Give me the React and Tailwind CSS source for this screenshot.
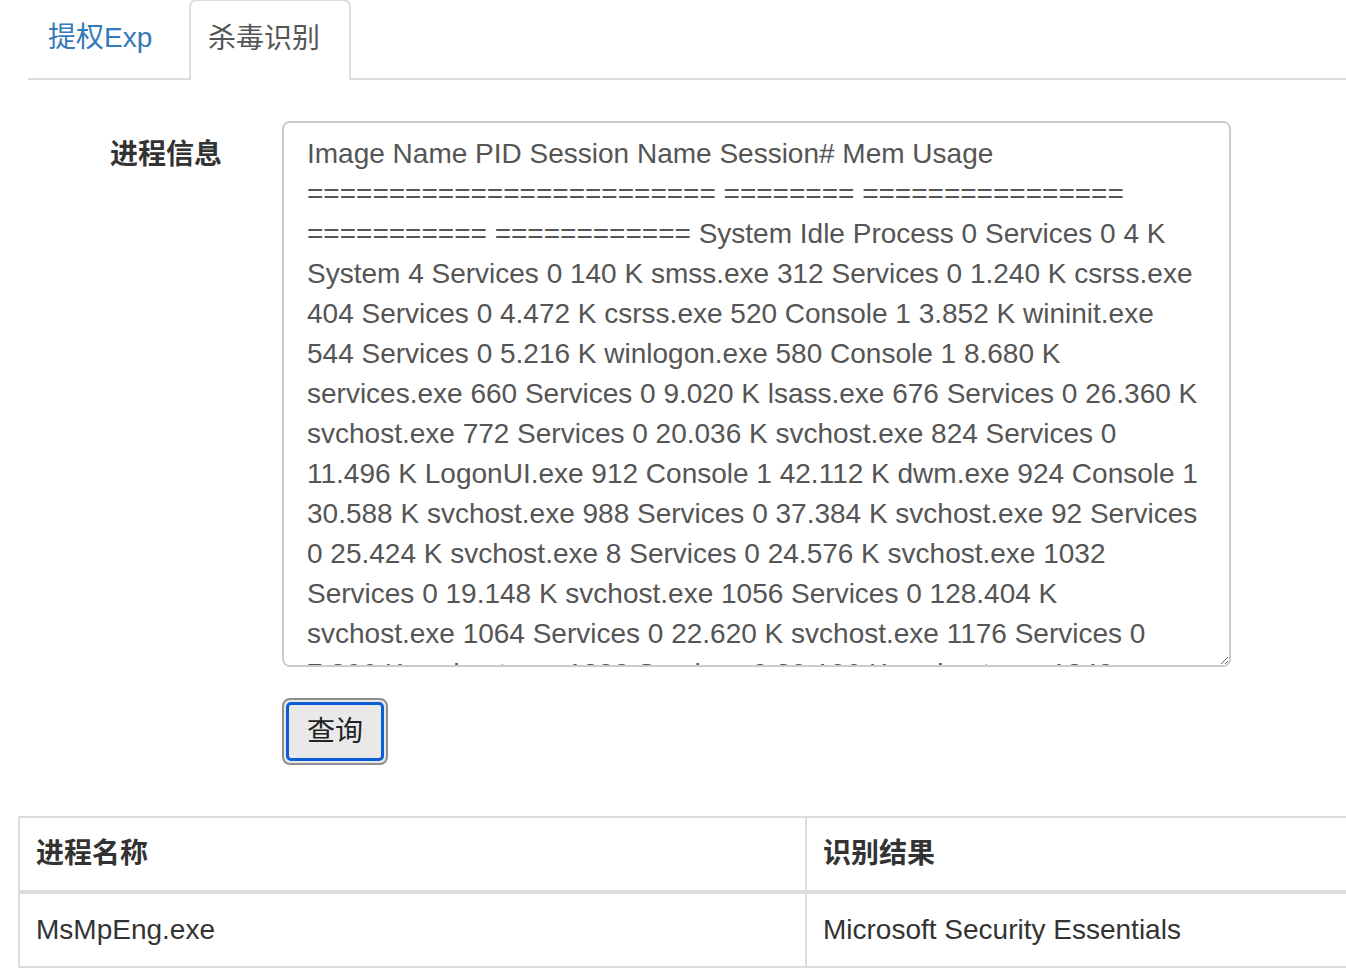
import { useState } from 'react'

const processText =
  'Image Name PID Session Name Session# Mem Usage ========================= ======== ================ =========== ============ System Idle Process 0 Services 0 4 K System 4 Services 0 140 K smss.exe 312 Services 0 1.240 K csrss.exe 404 Services 0 4.472 K csrss.exe 520 Console 1 3.852 K wininit.exe 544 Services 0 5.216 K winlogon.exe 580 Console 1 8.680 K services.exe 660 Services 0 9.020 K lsass.exe 676 Services 0 26.360 K svchost.exe 772 Services 0 20.036 K svchost.exe 824 Services 0 11.496 K LogonUI.exe 912 Console 1 42.112 K dwm.exe 924 Console 1 30.588 K svchost.exe 988 Services 0 37.384 K svchost.exe 92 Services 0 25.424 K svchost.exe 8 Services 0 24.576 K svchost.exe 1032 Services 0 19.148 K svchost.exe 1056 Services 0 128.404 K svchost.exe 1064 Services 0 22.620 K svchost.exe 1176 Services 0 7.396 K svchost.exe 1200 Services 0 39.196 K svchost.exe 1240 Services 0 14.208 K spoolsv.exe 1300 Services 0 12.944 K'

const font = "font-['Liberation_Sans','Noto_Sans_CJK_SC',sans-serif]"

export default function App() {
  const [text, setText] = useState(processText)

  return (
    <div className={`min-h-screen bg-white ${font} overflow-hidden`}>
      {/* Tabs */}
      <div className="flex ml-[28px] border-b-2 border-[#ddd] h-[80px]">
        <a className="w-[161px] pl-[20px] pt-[18px] text-[28px] leading-[40px] text-[#337ab7]">提权Exp</a>
        <div className="w-[162px] -mt-[1px] -mb-[2px] pl-[17px] pt-[18px] text-[28px] leading-[40px] text-[#555] bg-white border-2 border-b-0 border-[#ddd] rounded-t-[8px]">
          杀毒识别
        </div>
      </div>

      {/* Form */}
      <div className="flex mt-[41px]">
        <label className="w-[222px] shrink-0 text-right pt-[14px] text-[28px] leading-[40px] font-bold text-[#333]">
          进程信息
        </label>
        <div className="ml-[60px]">
          <textarea
            value={text}
            onChange={(e) => setText(e.target.value)}
            className={`block w-[949px] h-[546px] border-2 border-[#ccc] rounded-[8px] pt-[11px] px-[23px] text-[28px] leading-[40px] text-[#555] bg-white resize-y outline-none ${font}`}
          />
          <button className="mt-[31px] w-[106px] h-[67px] rounded-[8px] border-2 border-[#8f8f8f] bg-[#e9e9e9] p-[2px]">
            <span className="flex items-center justify-center h-full w-full rounded-[5px] border-[3px] border-[#0a5fd6] text-[28px] text-[#222]">
              查询
            </span>
          </button>
        </div>
      </div>

      {/* Result table */}
      <table className="mt-[51px] ml-[18px] w-[1400px] border-collapse border-2 border-[#ddd] text-[28px] text-[#333]">
        <thead>
          <tr className="h-[75px]">
            <th className="w-[787px] text-left font-bold px-[16px] border-2 border-b-4 border-[#ddd]">进程名称</th>
            <th className="text-left font-bold px-[16px] border-2 border-b-4 border-[#ddd]">识别结果</th>
          </tr>
        </thead>
        <tbody>
          <tr className="h-[75px]">
            <td className="px-[16px] border-2 border-[#ddd]">MsMpEng.exe</td>
            <td className="px-[16px] border-2 border-[#ddd]">Microsoft Security Essentials</td>
          </tr>
        </tbody>
      </table>
    </div>
  )
}
